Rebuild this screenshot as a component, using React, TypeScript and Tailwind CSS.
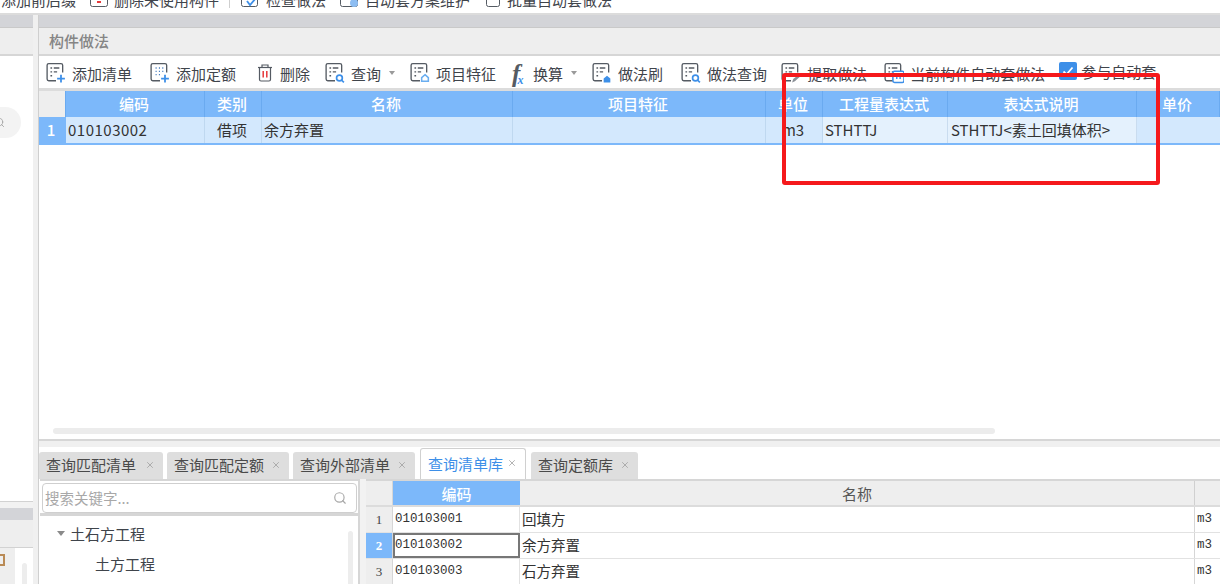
// App.tsx
// Quantity-software window: "构件做法" panel with its table, and the lookup tabs beneath.

import { Search, X } from "lucide-react";

const CJK = { fontFamily: '"Noto Sans CJK SC", "Noto Sans", sans-serif' };

type IconKind = "addList" | "addQuota" | "query" | "feature" | "brush" | "extract" | "apply";

// Rounded page with dotted lines; the corner badge changes per toolbar action.
function SheetIcon({ kind }: { kind: IconKind }) {
    return (
        <svg width="20" height="22" viewBox="1 2 18 19" fill="none" className="shrink-0">
            <path d="M10 18.5H3.5A1.5 1.5 0 0 1 2 17V4.5A1.5 1.5 0 0 1 3.5 3h11A1.5 1.5 0 0 1 16 4.5V11" stroke="#555b63" strokeWidth="1.2" />
            {kind === "addQuota" ? (
                <path d="M6 7h1M9 7h1M12 7h1M6 10h1M9 10h1M12 10h1M6 13h1M9 13h1" stroke="#4a7fc0" strokeWidth="1.2" />
            ) : (
                <path d="M5 7h1.5M8 7h5M5 10.5h1.5M8 10.5h3M5 14h1.5" stroke="#555b63" strokeWidth="1.2" />
            )}
            {(kind === "addList" || kind === "addQuota") && (
                <path d="M14.5 13v7M11 16.5h7" stroke="#3d8fe8" strokeWidth="1.6" />
            )}
            {kind === "query" && (
                <>
                    <circle cx="14" cy="16" r="2.6" stroke="#3d8fe8" strokeWidth="1.5" />
                    <path d="M16 18l2 2" stroke="#3d8fe8" strokeWidth="1.5" />
                </>
            )}
            {kind === "feature" && <path d="M14.5 13l3 2.6V19h-6v-3.4z" stroke="#6aaef0" strokeWidth="1.4" />}
            {kind === "brush" && <path d="M11.5 20v-3.5l3-2.5 3 2.5V20z" fill="#3d8fe8" />}
            {kind === "extract" && <path d="M11 20l1-3 5-4 1.5 1.5-5 4.5z" fill="#8b9097" />}
            {kind === "apply" && (
                <>
                    <rect x="9" y="10" width="10" height="10" rx="1.5" fill="#fff" stroke="#3d8fe8" strokeWidth="1.4" />
                    <path d="M12.5 13v4M15.5 13v4" stroke="#3d8fe8" strokeWidth="1.3" />
                </>
            )}
        </svg>
    );
}

function TrashIcon() {
    return (
        <svg width="18" height="22" viewBox="0 2 18 18" fill="none" className="shrink-0">
            <path d="M6 5V3h6v2" stroke="#555b63" strokeWidth="1.2" />
            <path d="M2 5.500h14" stroke="#555b63" strokeWidth="1.2" />
            <path d="M3.500 5.500V17.500A1.500 1.500 0 0 0 5 19h8a1.500 1.500 0 0 0 1.500-1.500V5.500" stroke="#555b63" strokeWidth="1.2" />
            <path d="M7.200 9v6.500M10.800 9v6.500" stroke="#e5383b" strokeWidth="1.500" />
        </svg>
    );
}

function Caret() {
    return <span className="ml-[8px] h-0 w-0 border-x-[3.5px] border-t-[4px] border-x-transparent border-t-[#9a9a9a]" />;
}

function ToolLabel({ children }: { children: string }) {
    return <span className="ml-[6px] whitespace-nowrap text-[15px] leading-none text-[#3f444b]">{children}</span>;
}

// Only the lower edge of these top icons is still on screen.
function CutIcon({ width, accent }: { width: number; accent: "red" | "check" | "gear" | "none" }) {
    return (
        <svg width={width} height="18" viewBox={`0 0 ${width} 18`} fill="none" className="shrink-0">
            <rect x="0.500" y="0.500" width={width - 1} height="16" rx="2" stroke="#555b63" />
            {accent === "red" && <path d="M7 12h4" stroke="#e5383b" strokeWidth="2" />}
            {accent === "check" && <path d="M6 11l3 4 6-7" stroke="#3d8fe8" strokeWidth="1.800" />}
            {accent === "gear" && <circle cx={width - 4} cy="13" r="4" fill="#8dbdf2" />}
        </svg>
    );
}

function TopToolbar() {
    return (
        <div className="relative h-[13px] overflow-hidden bg-white text-[15px] leading-none text-[#3f444b]">
            <div className="-mt-[10px] flex h-[18px] items-center whitespace-nowrap">
                <span className="ml-px w-[89px]">添加前后缀</span>
                <CutIcon width={18} accent="red" />
                <span className="ml-[6px] w-[115px]">删除未使用构件</span>
                <span className="h-[18px] w-px bg-[#cfcfcf]" />
                <span className="ml-[11px]"><CutIcon width={17} accent="check" /></span>
                <span className="ml-[8px] w-[74px]">检查做法</span>
                <CutIcon width={18} accent="gear" />
                <span className="ml-[7px] w-[121px]">自动套方案维护</span>
                <CutIcon width={14} accent="none" />
                <span className="ml-[7px]">批量自动套做法</span>
            </div>
        </div>
    );
}

function LeftRail() {
    return (
        <aside className="flex w-[33px] shrink-0 flex-col bg-white">
            <div className="h-[12px] bg-[#d3d4d8]" />
            <div className="h-[27px] border-t border-[#c9c9c9] bg-[#eeeeee]" />
            <div className="relative h-[447px] border-t-2 border-[#d6d6d6]">
                {/* Search pill, mostly cut off by the rail */}
                <div className="absolute left-0 top-[51px] flex h-[31px] w-[21px] items-center justify-start rounded-r-full bg-[#f3f3f3]">
                    <Search size={11} strokeWidth={2} className="-ml-[6px] text-[#a5a5a5]" />
                </div>
            </div>
            <div className="h-[7px] border-t border-[#d2d2d2] bg-[#f2f2f2]" />
            <div className="h-[12px] bg-[#d3d4d8]" />
            <div className="h-[27px] bg-[#eeeeee]" />
            <div className="flex flex-1 border-t border-[#d2d2d2]">
                <div className="w-[15px] bg-[#eeeeee] pt-[6px]">
                    <span className="block h-[12px] w-[5px] border-y-2 border-r-2 border-[#b98a55]" />
                </div>
                <div className="ml-[7px] mt-[15px] h-full w-[5px] rounded-full bg-[#ededed]" />
            </div>
        </aside>
    );
}

const HEAD_CELLS = ["", "编码", "类别", "名称", "项目特征", "单位", "工程量表达式", "表达式说明", "单价"];

function ComponentTable() {
    return (
        <div className="grid grid-cols-[27px_139px_57px_251px_253px_57px_125px_189px_1fr] text-[15px] leading-none">
            {HEAD_CELLS.map((label, i) => (
                <div
                    key={i}
                    className={`flex h-[26px] items-center justify-center border-r border-[#6aaaf0] pb-[2px] pr-[2px] font-medium ${i === 0 ? "bg-[#eeeeee]" : "bg-[#7cb8fa] text-white"}`}
                >
                    {label}
                </div>
            ))}
            <div className="flex h-[26px] items-center justify-center bg-[#7cb8fa] pb-[2px] pr-[3px] font-medium text-white">1</div>
            <div className="flex items-center border-r border-[#bfd8f0] bg-[#d3e8fd] pb-[2px] pl-[2px] tracking-[0.5px] text-[#333]">010103002</div>
            <div className="flex items-center justify-center border-r border-[#bfd8f0] bg-[#d3e8fd] pb-[2px] pr-[2px] text-[#333]">借项</div>
            <div className="flex items-center border-r border-[#bfd8f0] bg-[#d3e8fd] pb-[2px] pl-[2px] text-[#333]">余方弃置</div>
            <div className="border-r border-[#bfd8f0] bg-[#d3e8fd]" />
            <div className="flex items-center justify-center border-r border-[#bfd8f0] bg-[#d3e8fd] pb-[2px] pr-[2px] text-[#333]">m3</div>
            <div className="flex items-center border-r border-[#c9dcef] bg-[#e4f1fd] pb-[2px] pl-[2px] text-[#333]">STHTTJ</div>
            <div className="flex items-center border-r border-[#c9dcef] bg-[#e4f1fd] pb-[2px] pl-[3px] text-[#333]">STHTTJ&lt;素土回填体积&gt;</div>
            <div className="bg-[#d3e8fd]" />
            <div className="col-span-9 h-[2px] bg-[#7cb8fa]" />
        </div>
    );
}

const TABS = [
    { label: "查询匹配清单", width: "w-[124px]" },
    { label: "查询匹配定额", width: "w-[122px]" },
    { label: "查询外部清单", width: "w-[122px]" },
    { label: "查询清单库", width: "ml-[1px] w-[106px]", active: true },
    { label: "查询定额库", width: "ml-[1px] w-[107px]" },
];

function LookupTabs() {
    return (
        <div className="flex h-[32px] items-end gap-[4px] bg-white">
            {TABS.map((tab) => (
                <div
                    key={tab.label}
                    className={`flex items-center justify-between rounded-t-[3px] pb-[2px] pl-[7px] pr-[8px] text-[15px] leading-none ${tab.width} ${
                        tab.active
                            ? "h-[31px] border-x border-t border-[#d0d0d0] bg-white text-[#3d8fe8]"
                            : "h-[27px] bg-[#dedede] text-[#4a4a4a]"
                    }`}
                >
                    <span className="whitespace-nowrap">{tab.label}</span>
                    <X size={10} strokeWidth={1.800} className="text-[#9a9a9a]" />
                </div>
            ))}
        </div>
    );
}

function TreePane() {
    return (
        <div className="flex w-[320px] shrink-0 flex-col border-r-2 border-[#d6d6d6] bg-white">
            <div className="h-[37px] border-b-[3px] border-t-2 border-[#d6d6d6] pl-[2px] pr-[1px] pt-[2px]">
                <div className="flex h-[30px] items-center justify-between rounded-[4px] border border-[#cfcfcf] pl-[2px] pr-[9px] text-[14.500px] leading-none text-[#a8a8a8]">
                    <span>搜索关键字...</span>
                    <Search size={14} strokeWidth={2} className="text-[#a8a8a8]" />
                </div>
            </div>
            <div className="relative flex-1 text-[15px] leading-none text-[#3f444b]">
                <div className="flex h-[34px] items-center pl-[17px]">
                    <span className="mr-[5px] h-0 w-0 border-x-[4px] border-t-[5px] border-x-transparent border-t-[#8a8a8a]" />
                    土石方工程
                </div>
                <div className="pl-[55px] pt-[6px]">土方工程</div>
                <div className="absolute right-[5px] top-[15px] h-full w-[5px] rounded-full bg-[#ededed]" />
            </div>
        </div>
    );
}

const LIB_ROWS = [
    { no: 1, code: "010103001", name: "回填方" },
    { no: 2, code: "010103002", name: "余方弃置", selected: true },
    { no: 3, code: "010103003", name: "石方弃置" },
];

function LibraryGrid() {
    return (
        <div className="min-w-0 flex-1 border-t-2 border-[#d6d6d6] bg-white">
            <div className="grid h-[26px] grid-cols-[27px_127px_675px_1fr] border-b-2 border-[#dcdcdc] text-[15px] leading-none">
                <div className="border-r border-[#d6d6d6] bg-[#eeeeee]" />
                <div className="flex items-center justify-center bg-[#7cb8fa] font-medium text-white">编码</div>
                <div className="flex items-center justify-center border-r border-[#d0d0d0] bg-[#eeeeee] text-[#555]">名称</div>
                <div className="bg-[#eeeeee]" />
            </div>
            {LIB_ROWS.map((row) => (
                <div key={row.no} className="grid h-[26px] grid-cols-[27px_127px_675px_1fr] border-b border-[#e2e2e2] leading-none">
                    <div
                        className={`flex items-center justify-center border-r border-[#d6d6d6] text-[13px] ${row.selected ? "bg-[#7cb8fa] font-bold text-white" : "bg-[#eeeeee] text-[#444]"}`}
                        style={{ fontFamily: '"Liberation Serif", serif' }}
                    >
                        {row.no}
                    </div>
                    <div
                        className={`flex items-center text-[12.500px] text-[#333] ${row.selected ? "border-2 border-[#777]" : "border-r border-[#e2e2e2] pl-[2px]"}`}
                        style={{ fontFamily: '"Liberation Mono", monospace' }}
                    >
                        {row.code}
                    </div>
                    <div className="flex items-center border-r border-[#d6d6d6] pl-[2px] text-[14.500px] text-[#333]">{row.name}</div>
                    <div className="flex items-center pl-[2px] text-[12.500px] text-[#333]" style={{ fontFamily: '"Liberation Mono", monospace' }}>m3</div>
                </div>
            ))}
        </div>
    );
}

export default function App() {
    return (
        <div className="relative h-[584px] w-[1220px] overflow-hidden bg-white" style={CJK}>
            <TopToolbar />
            <div className="h-[2px] bg-[#dcdcdc]" />
            <div className="flex h-[569px]">
                <LeftRail />
                <div className="w-[6px] shrink-0 border-r border-[#cfcfcf] bg-[#f0f0f0]" />
                <main className="flex min-w-0 flex-1 flex-col">
                    <div className="h-[12px] bg-[#d3d4d8]" />
                    <div className="flex h-[27px] items-center border-t border-[#c9c9c9] bg-[#eeeeee] pb-[2px] pl-[10px] text-[15px] font-medium leading-none text-[#858585]">
                        构件做法
                    </div>
                    <div className="flex h-[34px] items-center border-t-2 border-[#d6d6d6] bg-white pl-[7px] pt-[2px]">
                        <SheetIcon kind="addList" />
                        <ToolLabel>添加清单</ToolLabel>
                        <span className="ml-[18px]"><SheetIcon kind="addQuota" /></span>
                        <ToolLabel>添加定额</ToolLabel>
                        <span className="ml-[20px]"><TrashIcon /></span>
                        <ToolLabel>删除</ToolLabel>
                        <span className="ml-[15px]"><SheetIcon kind="query" /></span>
                        <ToolLabel>查询</ToolLabel>
                        <Caret />
                        <span className="ml-[15px]"><SheetIcon kind="feature" /></span>
                        <ToolLabel>项目特征</ToolLabel>
                        <span className="ml-[16px] flex w-[15px] items-end whitespace-nowrap text-[25px] font-semibold italic leading-none text-[#555b63]" style={{ fontFamily: '"Liberation Serif", serif' }}>
                            f<span className="-ml-[3px] text-[12px] font-bold text-[#3d8fe8]">x</span>
                        </span>
                        <ToolLabel>换算</ToolLabel>
                        <Caret />
                        <span className="ml-[15px]"><SheetIcon kind="brush" /></span>
                        <ToolLabel>做法刷</ToolLabel>
                        <span className="ml-[18px]"><SheetIcon kind="query" /></span>
                        <ToolLabel>做法查询</ToolLabel>
                        <span className="ml-[14px]"><SheetIcon kind="extract" /></span>
                        <ToolLabel>提取做法</ToolLabel>
                        <span className="ml-[17px]"><SheetIcon kind="apply" /></span>
                        <ToolLabel>当前构件自动套做法</ToolLabel>
                        <span className="-mt-[4px] ml-[14px] flex h-[18px] w-[18px] items-center justify-center rounded-[2px] bg-[#3d8fe8]">
                            <svg width="14" height="14" viewBox="0 0 14 14" fill="none">
                                <path d="M2.500 7.500l3 3 6-7" stroke="#fff" strokeWidth="1.800" />
                            </svg>
                        </span>
                        <span className="-mt-[4px] ml-[4px] whitespace-nowrap text-[15px] leading-none text-[#3f444b]">参与自动套</span>
                    </div>
                    <div className="h-[3px] bg-[#dcdcdc]" />
                    <ComponentTable />
                    <div className="relative h-[296px] border-b-2 border-[#d6d6d6] bg-white">
                        <div className="absolute bottom-[5px] left-[14px] h-[6px] w-[942px] rounded-full bg-[#ececec]" />
                    </div>
                    <div className="h-[6px] bg-[#f0f0f0]" />
                    <LookupTabs />
                    <div className="flex min-h-0 flex-1">
                        <div className="w-px shrink-0 bg-white" />
                        <TreePane />
                        <div className="w-[6px] shrink-0 bg-[#f2f2f2]" />
                        <LibraryGrid />
                    </div>
                </main>
            </div>
            {/* Red annotation drawn on the screenshot */}
            <div className="absolute left-[782px] top-[73px] h-[112px] w-[378px] rounded-[3px] border-[4px] border-[#f5191c]" />
        </div>
    );
}
